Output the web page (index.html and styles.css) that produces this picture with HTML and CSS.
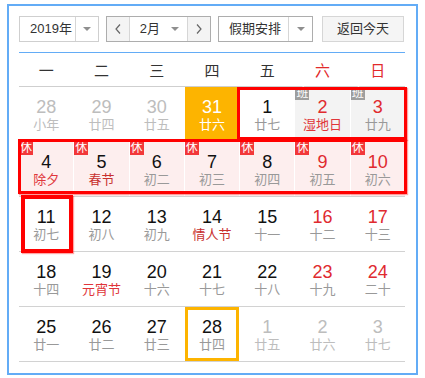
FILE: index.html
```html
<!DOCTYPE html>
<html lang="zh-CN">
<head>
<meta charset="utf-8">
<title>万年历</title>
<link rel="stylesheet" href="styles.css">
</head>
<body>
<div class="cal">
  <div class="toolbar">
    <div class="sel sel-year">
      <span class="sel-text">2019年</span>
      <span class="sel-arrow"><i class="tri"></i></span>
    </div>
    <div class="month-group">
      <span class="nav"><svg width="6" height="10" viewBox="0 0 6 10"><polyline points="5,0.5 1,5 5,9.5" fill="none" stroke="#666" stroke-width="1.2"/></svg></span>
      <span class="month-sel"><span class="sel-text">2月</span><i class="tri"></i></span>
      <span class="nav"><svg width="6" height="10" viewBox="0 0 6 10"><polyline points="1,0.5 5,5 1,9.5" fill="none" stroke="#666" stroke-width="1.2"/></svg></span>
    </div>
    <div class="sel sel-holiday">
      <span class="sel-text">假期安排</span>
      <span class="sel-arrow"><i class="tri"></i></span>
    </div>
    <span class="today-btn">返回今天</span>
  </div>

  <div class="weekdays">
    <span>一</span><span>二</span><span>三</span><span>四</span><span>五</span><span class="wk-red">六</span><span class="wk-red">日</span>
  </div>

  <div class="days">
    <div class="week">
      <div class="cell other"><b>28</b><em>小年</em></div>
      <div class="cell other"><b>29</b><em>廿四</em></div>
      <div class="cell other"><b>30</b><em>廿五</em></div>
      <div class="cell selected"><b>31</b><em>廿六</em></div>
      <div class="cell"><b>1</b><em>廿七</em></div>
      <div class="cell work red fest"><i class="badge badge-work">班</i><b>2</b><em>湿地日</em></div>
      <div class="cell work red"><i class="badge badge-work">班</i><b>3</b><em>廿九</em></div>
    </div>
    <div class="week">
      <div class="cell rest fest"><i class="badge badge-rest">休</i><b>4</b><em>除夕</em></div>
      <div class="cell rest fest dark"><i class="badge badge-rest">休</i><b>5</b><em>春节</em></div>
      <div class="cell rest"><i class="badge badge-rest">休</i><b>6</b><em>初二</em></div>
      <div class="cell rest"><i class="badge badge-rest">休</i><b>7</b><em>初三</em></div>
      <div class="cell rest"><i class="badge badge-rest">休</i><b>8</b><em>初四</em></div>
      <div class="cell rest red"><i class="badge badge-rest">休</i><b>9</b><em>初五</em></div>
      <div class="cell rest red"><i class="badge badge-rest">休</i><b>10</b><em>初六</em></div>
    </div>
    <div class="week">
      <div class="cell"><b>11</b><em>初七</em></div>
      <div class="cell"><b>12</b><em>初八</em></div>
      <div class="cell"><b>13</b><em>初九</em></div>
      <div class="cell fest dark"><b>14</b><em>情人节</em></div>
      <div class="cell"><b>15</b><em>十一</em></div>
      <div class="cell red"><b>16</b><em>十二</em></div>
      <div class="cell red"><b>17</b><em>十三</em></div>
    </div>
    <div class="week">
      <div class="cell"><b>18</b><em>十四</em></div>
      <div class="cell fest"><b>19</b><em>元宵节</em></div>
      <div class="cell"><b>20</b><em>十六</em></div>
      <div class="cell"><b>21</b><em>十七</em></div>
      <div class="cell"><b>22</b><em>十八</em></div>
      <div class="cell red"><b>23</b><em>十九</em></div>
      <div class="cell red"><b>24</b><em>二十</em></div>
    </div>
    <div class="week">
      <div class="cell"><b>25</b><em>廿一</em></div>
      <div class="cell"><b>26</b><em>廿二</em></div>
      <div class="cell"><b>27</b><em>廿三</em></div>
      <div class="cell today"><b>28</b><em>廿四</em></div>
      <div class="cell other"><b>1</b><em>廿五</em></div>
      <div class="cell other"><b>2</b><em>廿六</em></div>
      <div class="cell other"><b>3</b><em>廿七</em></div>
    </div>

    <div class="range range-a"></div>
    <div class="range range-b"></div>
    <div class="range range-c"></div>
  </div>
</div>
</body>
</html>
```

FILE: styles.css
```css
* { box-sizing: border-box; }

body {
  margin: 0;
  background: #fff;
  font-family: "Liberation Sans", "Noto Sans CJK SC", sans-serif;
  color: #333;
}

.cal {
  margin: 4px 0 0 7px;
  width: 411px;
  border: 2px solid #63acf6;
  padding: 10px 11px 11px 10px;
}

/* toolbar */
.toolbar {
  display: flex;
  align-items: stretch;
  height: 26px;
  font-size: 13px;
  line-height: 24px;
  color: #333;
}

.sel {
  display: flex;
  border: 1px solid #cfcfcf;
  background: #fff;
}

.sel-year { width: 80px; }
.sel-year .sel-text { width: 55px; padding-left: 10px; }

.sel-holiday { width: 95px; margin-left: 7px; border-color: #adadad; }
.sel-holiday .sel-text { width: 69px; padding-left: 10px; }

.sel-arrow {
  flex: 1;
  border-left: 1px solid #d6d6d6;
  display: flex;
  align-items: center;
  justify-content: center;
}

.tri {
  display: block;
  width: 0;
  height: 0;
  border-left: 4px solid transparent;
  border-right: 4px solid transparent;
  border-top: 4px solid #8f8f8f;
}

.month-group {
  display: flex;
  width: 105px;
  margin-left: 7px;
  border: 1px solid #adadad;
}

.nav {
  width: 22px;
  background: #f4f4f4;
  display: flex;
  align-items: center;
  justify-content: center;
}

.month-sel {
  width: 60px;
  display: flex;
  align-items: center;
  padding-left: 10px;
  padding-right: 8px;
  border-left: 1px solid #d6d6d6;
  border-right: 1px solid #d6d6d6;
}
.month-sel .sel-text { flex: 1; }

.today-btn {
  width: 82px;
  margin-left: 9px;
  border: 1px solid #d6d6d6;
  background: #f5f5f5;
  text-align: center;
}

/* weekdays */
.weekdays {
  margin-top: 10px;
  border-top: 1px solid #63acf6;
  border-bottom: 1px solid #cfcfcf;
  height: 35px;
  display: grid;
  grid-template-columns: repeat(7, 1fr);
  column-gap: 1px;
  align-items: center;
  text-align: center;
  font-size: 15px;
  color: #333;
}
.weekdays .wk-red { color: #e22a2a; }

/* days */
.days { position: relative; }

.week {
  display: grid;
  grid-template-columns: repeat(7, 1fr);
  column-gap: 1px;
  border-bottom: 1px solid #d2d2d2;
}
.week:last-of-type { border-bottom: 0; }

.cell {
  position: relative;
  height: 54px;
  padding-top: 10px;
  text-align: center;
}
.cell b {
  display: block;
  font-weight: normal;
  font-size: 18px;
  line-height: 20px;
  color: #111;
}
.cell em {
  display: block;
  font-style: normal;
  font-size: 13px;
  line-height: 16px;
  color: #999;
}

.cell.red b { color: #e02a2f; }
.cell.fest em { color: #e0353a; }
.cell.fest.dark em { color: #c8302e; }

.cell.other b,
.cell.other em { color: #bdbdbd; }

.cell.selected { background: #fdb400; }
.cell.selected b,
.cell.selected em { color: #fff; }

.cell.today { box-shadow: inset 0 0 0 3px #fdb400; }

.cell.rest { background: #fdeeee; }
.cell.work { background: #f3f3f3; }

.badge {
  position: absolute;
  left: 0;
  top: 0;
  width: 14px;
  height: 13px;
  font-style: normal;
  font-size: 12px;
  line-height: 13px;
  text-align: center;
  color: #fff;
}
.badge-rest { background: #f2383a; }
.badge-work { background: #9e9e9e; }

/* holiday range frames */
.range {
  position: absolute;
  border: 3px solid #ff0000;
  box-shadow: 1px 1px 1px rgba(255, 0, 0, 0.35);
  pointer-events: none;
}
.range-a { left: 218px; top: 0; width: 170px; height: 53px; }
.range-b { left: -1px; top: 52px; width: 389px; height: 55px; }
.range-c { left: 2px; top: 108px; width: 52px; height: 58px; border-width: 4px; }
```
